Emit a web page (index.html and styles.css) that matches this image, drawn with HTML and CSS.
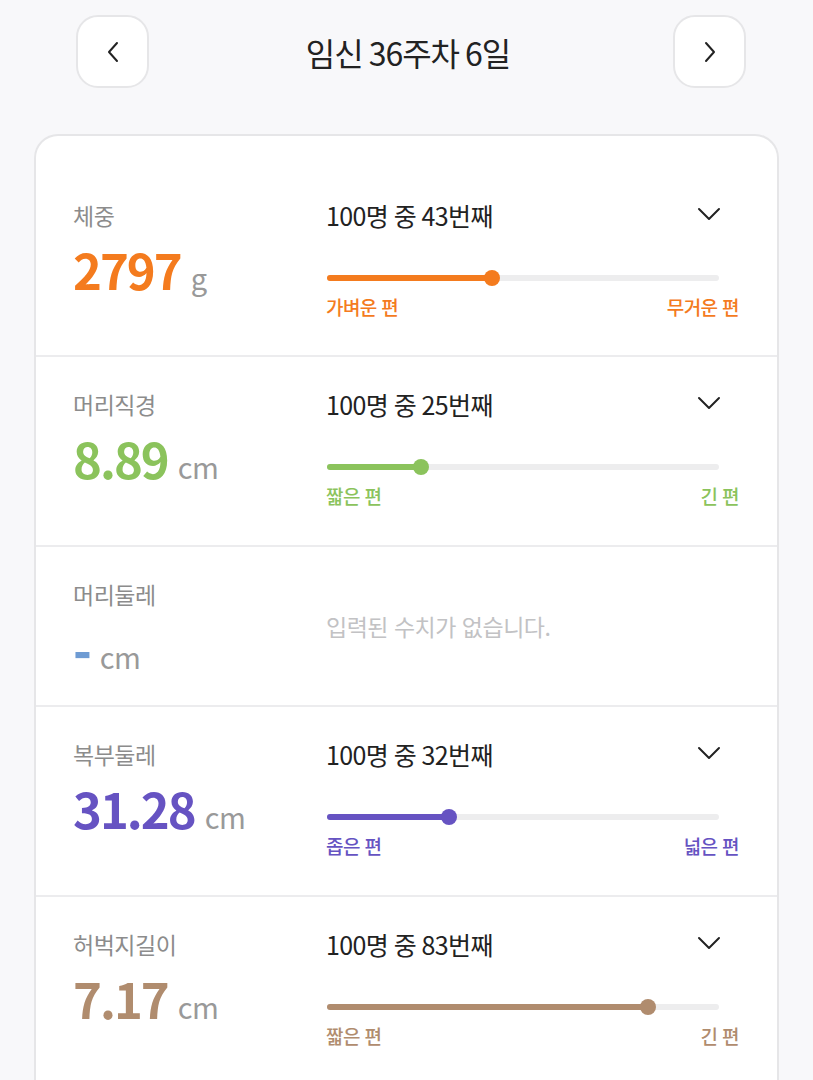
FILE: index.html
```html
<!DOCTYPE html>
<html lang="ko">
<head>
<meta charset="utf-8">
<title>임신 36주차 6일</title>
<link rel="stylesheet" href="styles.css">
</head>
<body>
<header class="topbar">
  <button class="nav-btn" aria-label="이전">
    <svg width="14" height="22" viewBox="0 0 14 22"><polyline points="11,2 3,11 11,20" fill="none" stroke="#222" stroke-width="2" stroke-linecap="round" stroke-linejoin="round"/></svg>
  </button>
  <h1 class="title">임신 36주차 6일</h1>
  <button class="nav-btn" aria-label="다음">
    <svg width="14" height="22" viewBox="0 0 14 22"><polyline points="3,2 11,11 3,20" fill="none" stroke="#222" stroke-width="2" stroke-linecap="round" stroke-linejoin="round"/></svg>
  </button>
</header>

<main class="card">
  <section class="row orange">
    <div class="left">
      <div class="label">체중</div>
      <div class="value"><span class="num">2797</span><span class="unit">g</span></div>
    </div>
    <div class="right">
      <div class="rank-line"><span class="rank">100명 중 43번째</span>
        <svg class="chev" width="24" height="14" viewBox="0 0 24 14"><polyline points="2,2 12,12 22,2" fill="none" stroke="#222" stroke-width="2" stroke-linecap="round" stroke-linejoin="round"/></svg>
      </div>
      <div class="track"><div class="fill" style="width:42%"><span class="dot"></span></div></div>
      <div class="ends"><span>가벼운 편</span><span>무거운 편</span></div>
    </div>
  </section>

  <section class="row green">
    <div class="left">
      <div class="label">머리직경</div>
      <div class="value"><span class="num">8.89</span><span class="unit">cm</span></div>
    </div>
    <div class="right">
      <div class="rank-line"><span class="rank">100명 중 25번째</span>
        <svg class="chev" width="24" height="14" viewBox="0 0 24 14"><polyline points="2,2 12,12 22,2" fill="none" stroke="#222" stroke-width="2" stroke-linecap="round" stroke-linejoin="round"/></svg>
      </div>
      <div class="track"><div class="fill" style="width:24%"><span class="dot"></span></div></div>
      <div class="ends"><span>짧은 편</span><span>긴 편</span></div>
    </div>
  </section>

  <section class="row blue empty">
    <div class="left">
      <div class="label">머리둘레</div>
      <div class="value"><span class="num dash">-</span><span class="unit">cm</span></div>
    </div>
    <div class="right">
      <p class="no-data">입력된 수치가 없습니다.</p>
    </div>
  </section>

  <section class="row purple">
    <div class="left">
      <div class="label">복부둘레</div>
      <div class="value"><span class="num">31.28</span><span class="unit">cm</span></div>
    </div>
    <div class="right">
      <div class="rank-line"><span class="rank">100명 중 32번째</span>
        <svg class="chev" width="24" height="14" viewBox="0 0 24 14"><polyline points="2,2 12,12 22,2" fill="none" stroke="#222" stroke-width="2" stroke-linecap="round" stroke-linejoin="round"/></svg>
      </div>
      <div class="track"><div class="fill" style="width:31%"><span class="dot"></span></div></div>
      <div class="ends"><span>좁은 편</span><span>넓은 편</span></div>
    </div>
  </section>

  <section class="row brown">
    <div class="left">
      <div class="label">허벅지길이</div>
      <div class="value"><span class="num">7.17</span><span class="unit">cm</span></div>
    </div>
    <div class="right">
      <div class="rank-line"><span class="rank">100명 중 83번째</span>
        <svg class="chev" width="24" height="14" viewBox="0 0 24 14"><polyline points="2,2 12,12 22,2" fill="none" stroke="#222" stroke-width="2" stroke-linecap="round" stroke-linejoin="round"/></svg>
      </div>
      <div class="track"><div class="fill" style="width:82%"><span class="dot"></span></div></div>
      <div class="ends"><span>짧은 편</span><span>긴 편</span></div>
    </div>
  </section>
</main>
</body>
</html>
```

FILE: styles.css
```css
* { box-sizing: border-box; }
html, body { margin: 0; padding: 0; }
body {
  background: #f8f8fa;
  font-family: "Noto Sans CJK KR", "Noto Sans", sans-serif;
  color: #222;
  width: 813px;
  overflow: hidden;
}

.topbar {
  display: flex;
  align-items: center;
  justify-content: space-between;
  padding: 15px 67px 0 76px;
}
.nav-btn {
  width: 73px;
  height: 73px;
  border: 2px solid #e6e6e8;
  border-radius: 22px;
  background: #fff;
  display: flex;
  align-items: center;
  justify-content: center;
  padding: 0;
}
.title {
  margin: 0 0 0 -6px;
  font-size: 32px;
  font-weight: 400;
  letter-spacing: -1px;
  word-spacing: -2px;
  color: #222;
}

.card {
  margin: 46px 0 0 34px;
  width: 745px;
  background: #fff;
  border: 2px solid #e6e6e8;
  border-bottom: none;
  border-radius: 24px 24px 0 0;
  padding-top: 32px;
}

.row {
  display: flex;
  padding: 32px 38px 0 37px;
  border-bottom: 2px solid #ececee;
  min-height: 190px;
}
.row:first-child { min-height: 189px; }
.row.empty { min-height: 160px; }

.left { width: 253px; flex: none; }
.right { flex: 1; }

.label {
  font-size: 23px;
  line-height: 30px;
  color: #8c8c8c;
  letter-spacing: -0.5px;
}
.value {
  display: flex;
  align-items: baseline;
  margin-top: 8px;
  height: 62px;
}
.num {
  font-size: 49px;
  line-height: 62px;
  font-weight: 700;
  letter-spacing: -2px;
}
.num.dash {
  position: relative;
  top: 5px;
  font-weight: 800;
}
.unit {
  font-size: 29px;
  color: #999;
  margin-left: 10px;
  letter-spacing: -0.5px;
}

.rank-line {
  display: flex;
  align-items: center;
  justify-content: space-between;
  padding-right: 20px;
  height: 32px;
  margin-top: -1px;
}
.rank {
  font-size: 25px;
  line-height: 32px;
  letter-spacing: -0.6px;
  word-spacing: -1px;
  color: #222;
}
.chev { margin-top: -2px; margin-right: -2px; }

.track {
  margin: 44px 20px 0 1px;
  height: 6px;
  border-radius: 3px;
  background: #ededee;
}
.fill {
  position: relative;
  height: 6px;
  border-radius: 3px;
}
.dot {
  position: absolute;
  right: -8px;
  top: -5px;
  width: 16px;
  height: 16px;
  border-radius: 50%;
}

.ends {
  display: flex;
  justify-content: space-between;
  margin-top: 14px;
  font-size: 19px;
  line-height: 24px;
  font-weight: 500;
  letter-spacing: -0.6px;
}

.no-data {
  margin: 32px 0 0;
  font-size: 23px;
  line-height: 30px;
  color: #c2c2c4;
  letter-spacing: -0.5px;
}

.orange .num, .orange .ends { color: #f47b1e; }
.orange .fill, .orange .dot { background: #f47b1e; }
.green .num, .green .ends { color: #8bc35c; }
.green .fill, .green .dot { background: #8bc35c; }
.blue .num { color: #6e9bd3; }
.purple .num, .purple .ends { color: #6653c2; }
.purple .fill, .purple .dot { background: #6653c2; }
.brown .num, .brown .ends { color: #b08c6e; }
.brown .fill, .brown .dot { background: #b08c6e; }
```
